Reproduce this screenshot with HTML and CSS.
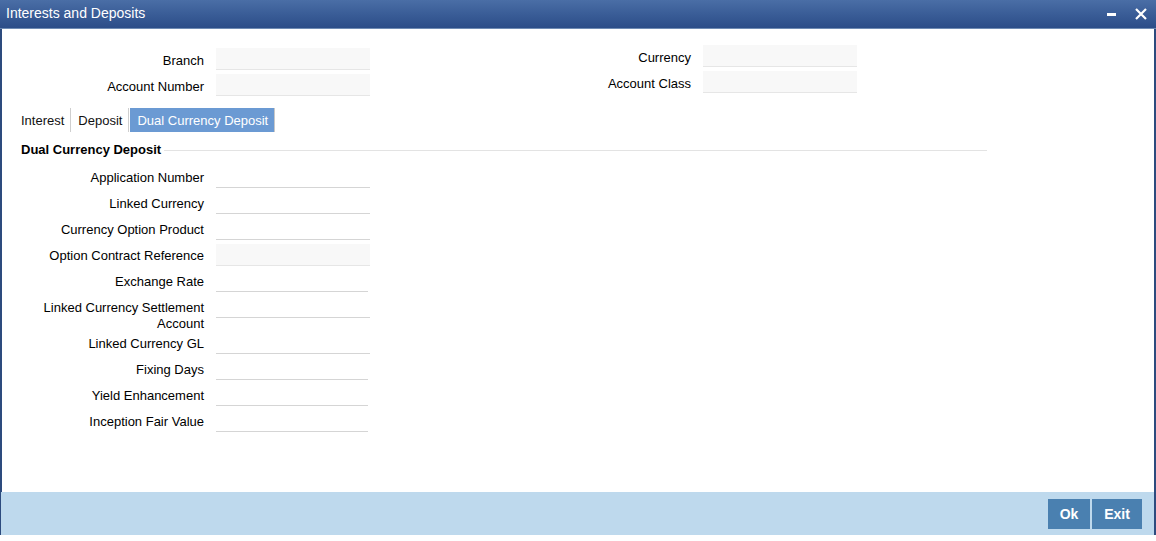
FILE: index.html
```html
<!DOCTYPE html>
<html>
<head>
<meta charset="utf-8">
<link rel="stylesheet" href="styles.css">
</head>
<body>
<div class="window">
  <div class="titlebar">
    <span class="title">Interests and Deposits</span>
    <div class="controls">
      <svg class="ico" width="14" height="14" viewBox="0 0 14 14"><rect x="2" y="6" width="9" height="3" fill="#fff"/></svg>
      <svg class="ico" width="14" height="14" viewBox="0 0 14 14"><path d="M2 2 L12 12 M12 2 L2 12" stroke="#fff" stroke-width="2.2" fill="none"/></svg>
    </div>
  </div>
  <div class="content">
    <div class="head">
      <div class="hcol">
        <div class="hrow"><label class="lbl">Branch</label><div class="inp ro"></div></div>
        <div class="hrow"><label class="lbl">Account Number</label><div class="inp ro"></div></div>
      </div>
      <div class="hcol right">
        <div class="hrow"><label class="lbl">Currency</label><div class="inp ro"></div></div>
        <div class="hrow"><label class="lbl">Account Class</label><div class="inp ro"></div></div>
      </div>
    </div>
    <div class="tabs">
      <div class="tab">Interest</div>
      <div class="tab">Deposit</div>
      <div class="tab active">Dual Currency Deposit</div>
    </div>
    <div class="section">
      <span class="stitle">Dual Currency Deposit</span>
      <span class="sline"></span>
    </div>
    <div class="fields">
      <div class="row"><label class="lbl">Application Number</label><div class="inp"></div></div>
      <div class="row"><label class="lbl">Linked Currency</label><div class="inp"></div></div>
      <div class="row"><label class="lbl">Currency Option Product</label><div class="inp"></div></div>
      <div class="row"><label class="lbl">Option Contract Reference</label><div class="inp ro"></div></div>
      <div class="row"><label class="lbl">Exchange Rate</label><div class="inp short"></div></div>
      <div class="row tall"><label class="lbl">Linked Currency Settlement Account</label><div class="inp"></div></div>
      <div class="row"><label class="lbl">Linked Currency GL</label><div class="inp"></div></div>
      <div class="row"><label class="lbl">Fixing Days</label><div class="inp short"></div></div>
      <div class="row"><label class="lbl">Yield Enhancement</label><div class="inp short"></div></div>
      <div class="row"><label class="lbl">Inception Fair Value</label><div class="inp short"></div></div>
    </div>
  </div>
  <div class="footer">
    <button class="btn ok">Ok</button>
    <button class="btn exit">Exit</button>
  </div>
</div>
</body>
</html>
```
FILE: styles.css
```css
* { box-sizing: border-box; }
html, body { margin: 0; padding: 0; background: #fff; }
body { font-family: "Liberation Sans", Arial, sans-serif; font-size: 13px; color: #000; }

.window {
  width: 1156px;
  height: 535px;
  display: flex;
  flex-direction: column;
  border-left: 2px solid #2d4b7e;
  border-right: 2px solid #2d4b7e;
}
.titlebar {
  height: 29px;
  flex: none;
  background: linear-gradient(#4a6ea6, #3a5d97 50%, #2c4d88);
  border-bottom: 1px solid #6f8bb3;
  display: flex;
  align-items: center;
  justify-content: space-between;
  padding: 0 8px 2px 6px;
  margin-left: -2px;
  margin-right: -2px;
}
.title { color: #fff; font-size: 14px; }
.controls { display: flex; gap: 15px; align-items: center; margin-top: 2px; }
.ico { display: block; }

.content { flex: 1; }
.head { display: flex; padding-top: 19px; }
.hcol { display: flex; flex-direction: column; gap: 4px; width: 486px; }
.hcol.right { margin-top: -3px; }
.hrow { display: flex; align-items: center; height: 22px; }
.hrow .lbl { width: 214px; text-align: right; padding-right: 12px; padding-top: 2px; }
.hcol.right .hrow .lbl { width: 215px; }
.inp {
  width: 154px;
  height: 22px;
  border-bottom: 1px solid #d5d5d5;
  background: #fff;
}
.inp.ro { background: #f8f8f8; border-bottom-color: #e6e6e6; }
.inp.short { width: 152px; }

.tabs { display: flex; margin-top: 12px; padding-left: 12px; height: 24px; }
.tab {
  padding: 1px 6px 0 7px;
  height: 24px;
  line-height: 23px;
  border-right: 1px solid #cfcfcf;
  color: #111;
}
.tab.active { background: #6b9ad3; color: #fff; border-right-color: #c8c8c8; margin-left: 1px; }

.section { display: flex; align-items: center; padding-left: 19px; margin-top: 9px; height: 17px; width: 985px; }
.stitle { font-weight: bold; white-space: nowrap; }
.sline { flex: 1; border-top: 1px solid #e3e3e3; margin-left: 3px; margin-top: 2px; }

.fields { margin-top: 6px; }
.row { display: flex; align-items: flex-start; height: 26px; }
.row.tall { height: 36px; }
.row .lbl { width: 202px; text-align: right; padding-top: 6px; line-height: 16px; padding-left: 30px; }
.row .inp { margin-left: 12px; margin-top: 2px; }

.footer {
  height: 43px;
  flex: none;
  background: #bed9ed;
  display: flex;
  justify-content: flex-end;
  align-items: center;
  gap: 2px;
  padding-right: 12px;
  margin-left: -1px;
}
.btn {
  font-family: "Liberation Sans", Arial, sans-serif;
  font-size: 14px;
  font-weight: bold;
  color: #fff;
  background: #4a80b0;
  border: none;
  height: 30px;
  padding: 0;
  margin-top: 1px;
}
.btn.ok { width: 42px; }
.btn.exit { width: 50px; }
```
